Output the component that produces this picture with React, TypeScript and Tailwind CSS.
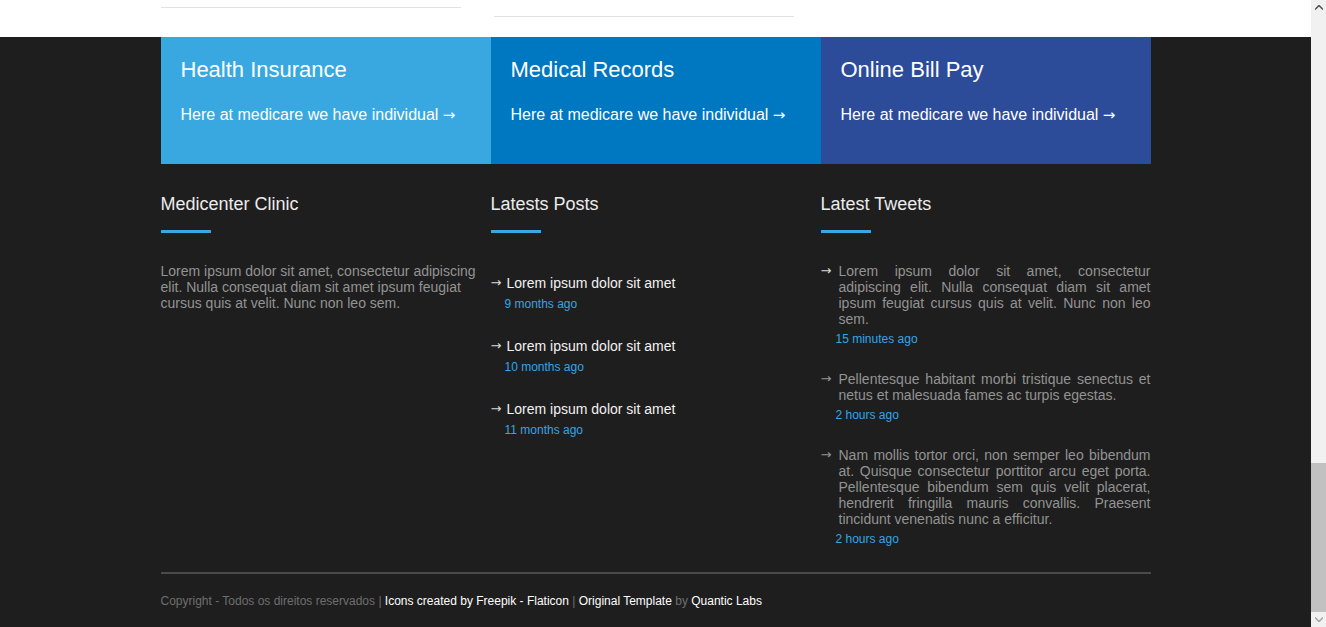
const boxes = [
  { title: "Health Insurance", bg: "bg-[#3aa8e0]" },
  { title: "Medical Records", bg: "bg-[#0077c1]" },
  { title: "Online Bill Pay", bg: "bg-[#2c4b99]" },
];

const posts = ["9 months ago", "10 months ago", "11 months ago"];

const tweets = [
  {
    text: "Lorem ipsum dolor sit amet, consectetur adipiscing elit. Nulla consequat diam sit amet ipsum feugiat cursus quis at velit. Nunc non leo sem.",
    time: "15 minutes ago",
  },
  {
    text: "Pellentesque habitant morbi tristique senectus et netus et malesuada fames ac turpis egestas.",
    time: "2 hours ago",
  },
  {
    text: "Nam mollis tortor orci, non semper leo bibendum at. Quisque consectetur porttitor arcu eget porta. Pellentesque bibendum sem quis velit placerat, hendrerit fringilla mauris convallis. Praesent tincidunt venenatis nunc a efficitur.",
    time: "2 hours ago",
  },
];

const arrowFont = { fontFamily: '"DejaVu Sans", sans-serif' };

function Heading({ children }: { children: string }) {
  return (
    <div>
      <h3 className="text-[18px] leading-[22px] text-[#ececec]">{children}</h3>
      <div className="mt-[15px] h-[3px] w-[50px] bg-[#3aa8e0]" />
    </div>
  );
}

export default function App() {
  return (
    <div
      className="flex h-screen overflow-hidden"
      style={{ fontFamily: '"Liberation Sans", Arial, sans-serif' }}
    >
      <div className="flex flex-1 flex-col">
        {/* white strip left over from section above */}
        <div className="h-[37px] bg-white">
          <div className="mx-auto flex w-[990px] gap-[33px]">
            <div className="mt-[7px] h-px w-[300px] bg-[#e2e2e2]" />
            <div className="mt-[16px] h-px w-[300px] bg-[#e2e2e2]" />
          </div>
        </div>

        <footer className="flex-1 bg-[#1e1e1e]">
          <div className="mx-auto w-[990px]">
            <div className="grid grid-cols-3">
              {boxes.map((b) => (
                <div key={b.title} className={`${b.bg} h-[127px] px-5 pt-[20px] text-white`}>
                  <h2 className="text-[22px] leading-[26px]">{b.title}</h2>
                  <p className="mt-[22px] text-[16px] leading-[20px]">
                    Here at medicare we have individual <span style={arrowFont} className="text-[15px]">→</span>
                  </p>
                </div>
              ))}
            </div>

            <div className="grid grid-cols-3 pt-[29px]">
              <div>
                <Heading>Medicenter Clinic</Heading>
                <p className="mt-[30px] pr-[14px] text-[14px] leading-[16px] text-[#939393]">
                  Lorem ipsum dolor sit amet, consectetur adipiscing elit. Nulla consequat diam sit amet ipsum feugiat cursus quis at velit. Nunc non leo sem.
                </p>
              </div>

              <div>
                <Heading>Latests Posts</Heading>
                <ul className="mt-[42px] flex flex-col gap-[26px]">
                  {posts.map((p) => (
                    <li key={p}>
                      <div className="flex text-[14px] leading-[16px] text-[#f2f2f2]">
                        <span style={arrowFont} className="w-4 text-[13px] text-[#d8d8d8]">→</span>
                        <span>Lorem ipsum dolor sit amet</span>
                      </div>
                      <div className="mt-[5px] pl-[14px] text-[12px] leading-[16px] text-[#34a5e6]">
                        {p}
                      </div>
                    </li>
                  ))}
                </ul>
              </div>

              <div>
                <Heading>Latest Tweets</Heading>
                <ul className="mt-[30px] flex flex-col gap-[24px]">
                  {tweets.map((t, i) => (
                    <li key={i}>
                      <div className="flex text-[14px] leading-[16px] text-[#939393]">
                        <span
                          style={arrowFont}
                          className={`w-[18px] shrink-0 text-[13px] ${i === 0 ? "text-[#d8d8d8]" : ""}`}
                        >
                          →
                        </span>
                        <p className="text-justify">{t.text}</p>
                      </div>
                      <div className="mt-[4px] pl-[15px] text-[12px] leading-[16px] text-[#34a5e6]">
                        {t.time}
                      </div>
                    </li>
                  ))}
                </ul>
              </div>
            </div>

            <div className="mt-[25px] h-[2px] bg-[#4a4a4a]" />
            <p className="pt-[19px] text-[12px] leading-[16px] text-[#6e6e6e]">
              Copyright - Todos os direitos reservados |{" "}
              <span className="text-white">Icons created by Freepik - Flaticon</span> |{" "}
              <span className="text-white">Original Template</span> by{" "}
              <span className="text-white">Quantic Labs</span>
            </p>
          </div>
        </footer>
      </div>

      {/* scrollbar */}
      <div className="flex w-[15px] flex-col bg-[#f1f1f1]">
        <div className="flex h-[15px] items-center justify-center">
          <svg width="8" height="5" viewBox="0 0 8 5">
            <path d="M0 4.5 L4 0.5 L8 4.5" fill="none" stroke="#505050" strokeWidth="1.5" />
          </svg>
        </div>
        <div className="flex-1" />
        <div className="h-[149px] bg-[#c1c1c1]" />
        <div className="flex h-[15px] items-center justify-center">
          <svg width="8" height="5" viewBox="0 0 8 5">
            <path d="M0 0.5 L4 4.5 L8 0.5" fill="none" stroke="#a3a3a3" strokeWidth="1.5" />
          </svg>
        </div>
      </div>
    </div>
  );
}
